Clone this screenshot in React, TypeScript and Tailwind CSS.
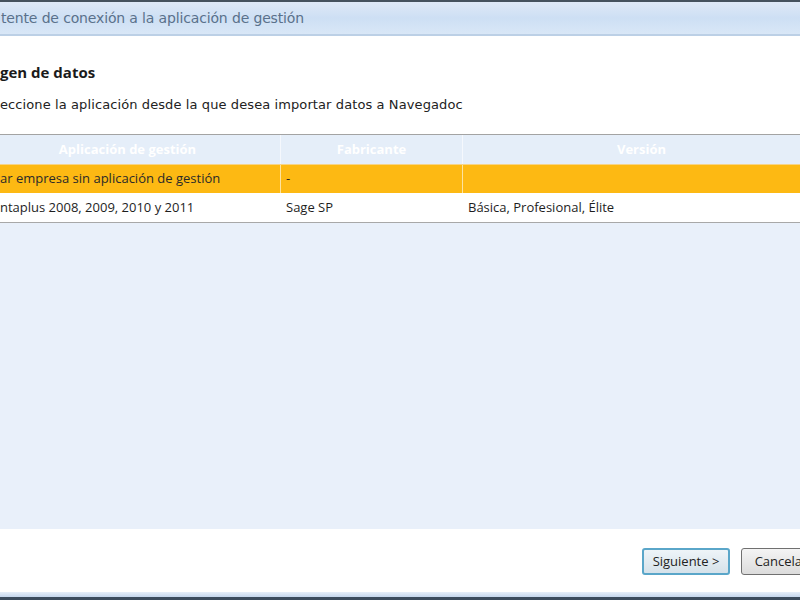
import React from "react";

export default function App() {
  return (
    <div className="w-[800px] h-[600px] overflow-hidden flex flex-col bg-white" style={{ fontFamily: '"DejaVu Sans", Verdana, sans-serif' }}>
      <div className="h-[2px] bg-[#46525e] shrink-0" />
      <div className="h-[32px] shrink-0 flex items-center pt-[1px] bg-gradient-to-b from-[#dfe9f7] via-[#cddff4] to-[#d9e7f7] text-[#5a718b] text-[14px] tracking-[-0.15px] pl-[1px]">
        tente de conexión a la aplicación de gestión
      </div>
      <div className="h-[2px] bg-[#bcd0e6] shrink-0" />
      <div className="flex-1 flex flex-col">
        <div className="pt-[26px] pl-0 text-[15px] leading-[20px] font-bold text-[#1b1b1b]" style={{ fontFamily: '"Open Sans", sans-serif' }}>
          gen de datos
        </div>
        <div className="mt-[14px] text-[13px] leading-[18px] text-[#222] tracking-[0.1px]">
          eccione la aplicación desde la que desea importar datos a Navegadoc
        </div>
        <div className="mt-[20px] flex-1 flex flex-col overflow-hidden border-t border-[#a3a3a3] bg-[#e9f0fa]" style={{ fontFamily: '"Open Sans", sans-serif' }}>
          <div className="flex w-[855px] -ml-[25px] h-[29px] bg-[#e5eef9] text-white text-[13px] font-bold">
            <div className="w-[306px] flex items-center justify-center border-r border-[#f5f8fd]">Aplicación de gestión</div>
            <div className="w-[182px] flex items-center justify-center border-r border-[#f5f8fd]">Fabricante</div>
            <div className="flex-1 flex items-center justify-center pr-[10px]">Versión</div>
          </div>
          <div className="flex h-[29px] bg-[#fdb913] text-[13px] text-[#2a2a2a] border-t border-[#f6d488]">
            <div className="w-[281px] flex items-center border-r border-[#fde3a0]">ar empresa sin aplicación de gestión</div>
            <div className="w-[182px] flex items-center pl-[5px] border-r border-[#fde3a0]">-</div>
            <div className="flex-1" />
          </div>
          <div className="flex h-[30px] bg-white text-[13px] text-[#1e1e1e] border-b border-[#a8a8a8]">
            <div className="w-[281px] flex items-center">ntaplus 2008, 2009, 2010 y 2011</div>
            <div className="w-[182px] flex items-center pl-[5px]">Sage SP</div>
            <div className="flex-1 flex items-center pl-[5px]">Básica, Profesional, Élite</div>
          </div>
          <div className="flex-1" />
        </div>
        <div className="h-[63px] shrink-0 bg-white flex items-start pt-[19px] pl-[642px] gap-[11px]" style={{ fontFamily: '"Open Sans", sans-serif' }}>
          <button className="w-[88px] h-[27px] shrink-0 rounded-[3px] border-2 border-[#5aa6c9] bg-gradient-to-b from-[#eef4f8] to-[#d6e2ea] text-[13px] text-[#222] flex items-center justify-center">
            Siguiente &gt;
          </button>
          <button className="w-[80px] h-[27px] shrink-0 rounded-[3px] border border-[#707070] bg-gradient-to-b from-[#f4f4f4] to-[#dcdcdc] text-[13px] text-[#222] flex items-center justify-center">
            Cancelar
          </button>
        </div>
      </div>
      <div className="h-[5px] shrink-0 bg-gradient-to-b from-[#e6eef9] to-[#c4d6ec]" />
      <div className="h-[3px] shrink-0 bg-[#3b4b5d]" />
    </div>
  );
}
